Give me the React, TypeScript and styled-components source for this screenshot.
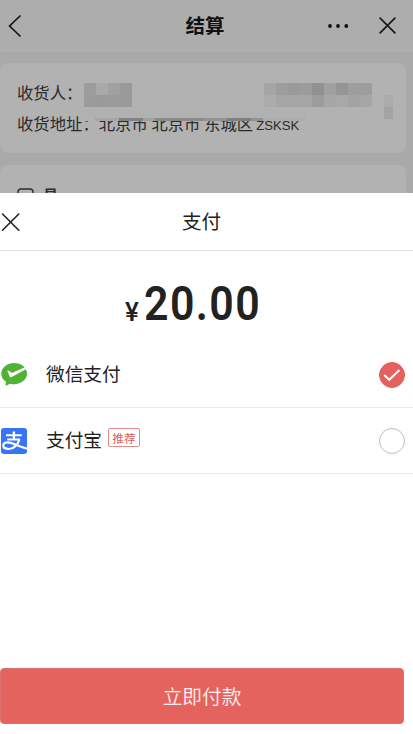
import React from "react";
import styled, { createGlobalStyle } from "styled-components";

const GlobalStyle = createGlobalStyle`
  * { box-sizing: border-box; }
  body { margin: 0; background: #fff; font-family: "Noto Sans CJK SC", sans-serif; }
`;

const Screen = styled.div`
  width: 413px;
  height: 734px;
  overflow: hidden;
  display: flex;
  flex-direction: column;
  background: #a9a9a9;
`;

const Backdrop = styled.div`
  height: 193px;
  flex: none;
  overflow: hidden;
`;

const NavBar = styled.header`
  height: 52px;
  display: grid;
  grid-template-columns: 1fr auto 1fr;
  align-items: center;
  background: #adadad;
  padding: 0 16px 0 8px;
`;

const NavTitle = styled.h1`
  margin: 0 1px 0 6px;
  font-size: 19.5px;
  line-height: 50px;
  height: 52px;
  font-weight: 700;
  color: #111;
`;

const NavActions = styled.div`
  display: flex;
  align-items: center;
  justify-content: flex-end;
  gap: 30px;
  margin: -1px 1px 0 0;
`;

const Card = styled.section<{ $height: number; $gap: number }>`
  position: relative;
  width: 406px;
  height: ${(p) => p.$height}px;
  margin-top: ${(p) => p.$gap}px;
  padding: 15px 17px;
  border-radius: 8px;
  background: #b2b2b2;
  color: #2b2b2b;
`;

const InfoLine = styled.div`
  height: 30.5px;
  line-height: 29px;
  font-size: 16.35px;
  white-space: pre;
  display: flex;
`;

const Latin = styled.span`
  font: 13.2px/33px "Liberation Sans", sans-serif;
  margin-left: 3px;
`;

const Mosaic = styled.div<{ $x: number; $y: number; $cols: number; $cell?: number }>`
  position: absolute;
  left: ${(p) => p.$x}px;
  top: ${(p) => p.$y}px;
  display: grid;
  grid-template-columns: repeat(${(p) => p.$cols}, ${(p) => p.$cell ?? 12}px);
  grid-auto-rows: 12px;
`;

const Tile = styled.i<{ $tone: string }>`
  background: ${(p) => p.$tone};
`;

const Smear = styled.div`
  position: absolute;
  left: 83px;
  top: 47px;
  width: 223px;
  height: 11px;
  display: flex;
  align-items: flex-end;
  background: #b1b1b1;
`;

const SmearBar = styled.i<{ $w: number; $tone: string }>`
  width: ${(p) => p.$w}px;
  height: 3px;
  background: ${(p) => p.$tone};
`;

const ShopLine = styled.div`
  display: flex;
  align-items: flex-start;
  gap: 9px;
  padding-top: 8px;
  font-size: 15px;
  line-height: 20px;
  font-weight: 700;
`;

const ShopName = styled.span`
  margin-top: -3px;
`;

const Sheet = styled.main`
  flex: 1;
  display: flex;
  flex-direction: column;
  background: #fff;
  color: #222;
`;

const SheetHeader = styled.div`
  height: 58px;
  display: grid;
  grid-template-columns: 182px 1fr;
  align-items: center;
  border-bottom: 1px solid #e4e4e4;
`;

const SheetTitle = styled.h2`
  margin: 0;
  font-size: 19.6px;
  line-height: 54px;
  height: 56px;
  font-weight: 400;
`;

const Amount = styled.div`
  height: 91px;
  padding: 28px 0 0 125px;
  display: flex;
  color: #222;
  font-family: Roboto, sans-serif;
`;

const Currency = styled.span`
  width: 19px;
  font-size: 26px;
  line-height: 66px;
  font-weight: 500;
`;

const Digits = styled.span`
  font-size: 49px;
  line-height: 50px;
  font-weight: 600;
  letter-spacing: 1.6px;
  transform: scaleX(0.875);
  transform-origin: left;
`;

const Method = styled.div`
  height: 66px;
  display: flex;
  align-items: center;
  padding-right: 8.5px;
  border-bottom: 1px solid #ebebeb;
`;

const MethodIcon = styled.div`
  width: 46px;
  height: 28px;
`;

const MethodName = styled.span`
  font-size: 18.7px;
  line-height: 28px;
  margin-top: -4px;
`;

const Tag = styled.span`
  width: 32px;
  height: 19px;
  margin: -6px 0 0 6px;
  border: 1px solid #e08a88;
  border-radius: 2px;
  color: #dc5f5c;
  font-size: 11.7px;
  line-height: 18px;
  text-align: center;
`;

const Radio = styled.span<{ $on?: boolean }>`
  width: 26px;
  height: 26px;
  margin-left: auto;
  display: grid;
  place-items: center;
  border-radius: 50%;
  border: 1px solid ${(p) => (p.$on ? "#e4615e" : "#bdbdbd")};
  background: ${(p) => (p.$on ? "#e4615e" : "#fff")};
`;

const PayButton = styled.button`
  width: 404px;
  height: 56px;
  margin: auto 0 10px 0;
  padding: 0;
  border: 1px solid #d8706d;
  border-radius: 4px;
  background: #e5635f;
  color: #fff1ef;
  font: 350 19.7px/54px "Noto Sans CJK SC", sans-serif;
`;

const Cross = ({ size, width }: { size: number; width: number }) => (
  <svg width={size} height={size} viewBox="0 0 18 18" fill="none" stroke="#181818" strokeWidth={width} strokeLinecap="round">
    <path d="M1.2 1.2 16.8 16.8M16.8 1.2 1.2 16.8" />
  </svg>
);

const NAME_TONES = ["#9c9c9c", "#a9a9a9", "#a1a1a1", "#999999", "#9b9b9b", "#9a9a9a", "#9b9b9b", "#999999"];
const PHONE_TONES = [
  "#a5a5a5", "#9d9d9d", "#9a9a9a", "#9c9c9c", "#919191", "#a0a0a0", "#959595", "#9e9e9e", "#9d9d9d",
  "#ababab", "#a5a5a5", "#a5a5a5", "#a5a5a5", "#9c9c9c", "#a6a6a6", "#a8a8a8", "#a3a3a3", "#a6a6a6",
];
const EDGE_TONES = ["#ababab", "#a3a3a3"];
const SMEAR: [number, string][] = [
  [12, "#b1b1b1"], [24, "#a5a5a5"], [24, "#828282"], [12, "#a0a0a0"],
  [48, "#8a8a8a"], [24, "#939393"], [24, "#808080"], [12, "#929292"], [43, "#acacac"],
];

const tiles = (tones: string[]) => tones.map((t, i) => <Tile key={i} $tone={t} />);

export default function App() {
  return (
    <Screen>
      <GlobalStyle />
      <Backdrop>
        <NavBar>
          <svg width="14" height="22" viewBox="0 0 14 22" fill="none" stroke="#151515" strokeWidth="1.7" strokeLinecap="round">
            <path d="M12 1 1.6 11 12 21" />
          </svg>
          <NavTitle>结算</NavTitle>
          <NavActions>
            <svg width="22" height="4" viewBox="0 0 22 4" fill="#111">
              <circle cx="3" cy="2" r="1.9" />
              <circle cx="11" cy="2" r="1.9" />
              <circle cx="19.3" cy="2" r="1.9" />
            </svg>
            <Cross size={17} width={1.8} />
          </NavActions>
        </NavBar>
        <Card $height={90} $gap={11}>
          <InfoLine>收货人：</InfoLine>
          <InfoLine>收货地址：北京市 北京市 东城区<Latin>ZSKSK</Latin></InfoLine>
          <Smear>
            {SMEAR.map(([w, t], i) => <SmearBar key={i} $w={w} $tone={t} />)}
          </Smear>
          <Mosaic $x={83.5} $y={19.5} $cols={4}>{tiles(NAME_TONES)}</Mosaic>
          <Mosaic $x={263.5} $y={19.5} $cols={9}>{tiles(PHONE_TONES)}</Mosaic>
          <Mosaic $x={383.5} $y={31.5} $cols={1} $cell={9}>{tiles(EDGE_TONES)}</Mosaic>
        </Card>
        <Card $height={60} $gap={12}>
          <ShopLine>
            <svg width="17" height="17" viewBox="0 0 17 17" fill="none" stroke="#2b2b2b" strokeWidth="1.4">
              <path d="M1 6V4q0-3 3-3h9q3 0 3 3v2M3 6v10h11V6" />
            </svg>
            <ShopName>易</ShopName>
          </ShopLine>
        </Card>
      </Backdrop>
      <Sheet>
        <SheetHeader>
          <svg width="22" height="20" viewBox="0 0 22 20" fill="none" stroke="#222" strokeWidth="1.6" strokeLinecap="round">
            <path d="M2.5 2 18.8 18.2M18.8 2 2.5 18.2" />
          </svg>
          <SheetTitle>支付</SheetTitle>
        </SheetHeader>
        <Amount>
          <Currency>¥</Currency>
          <Digits>20.00</Digits>
        </Amount>
        <Method>
          <MethodIcon>
            <svg width="28" height="28" viewBox="0 0 28 28">
              <path fill="#50b336" d="M14.2 2C7 2 1.3 6.8 1.3 12.7c0 3.3 1.8 6.2 4.7 8.1L5.400 25l4.800-2.300c1.300.4 2.600.6 4 .6 7.100 0 12.800-4.800 12.800-10.700S21.300 2 14.200 2z" />
              <path fill="#fff" d="M7.300 9.800c.7-.5 1.300-.2 1.900.3l2.700 1.800L26 5.800l.8 2-15.100 8.200c-.9.5-1.600.3-2-.6z" />
            </svg>
          </MethodIcon>
          <MethodName>微信支付</MethodName>
          <Radio $on>
            <svg width="18" height="14" viewBox="0 0 18 14" fill="none" stroke="#fff" strokeWidth="2">
              <path d="M1.200 7 6.300 11.800 16.400 2" />
            </svg>
          </Radio>
        </Method>
        <Method>
          <MethodIcon>
            <svg width="28" height="28" viewBox="0 0 28 28">
              <rect x="1" y="1" width="26" height="26" rx="3" fill="#3875f6" />
              <g fill="none" stroke="#fff">
                <path strokeWidth="2" d="M6 8.300h15.800M7.200 12.600h12.600" />
                <path strokeWidth="2.400" d="M13.900 4.500v8" />
                <path strokeWidth="2.200" d="M19.400 12.200C18 17.500 13.800 22 8.700 22c-3.300 0-5.400-1.400-5.400-3.500 0-2 1.900-3.200 4.500-3.200 5 0 9.300 4.300 19.200 6.300" />
              </g>
            </svg>
          </MethodIcon>
          <MethodName>支付宝</MethodName>
          <Tag>推荐</Tag>
          <Radio />
        </Method>
        <PayButton>立即付款</PayButton>
      </Sheet>
    </Screen>
  );
}
